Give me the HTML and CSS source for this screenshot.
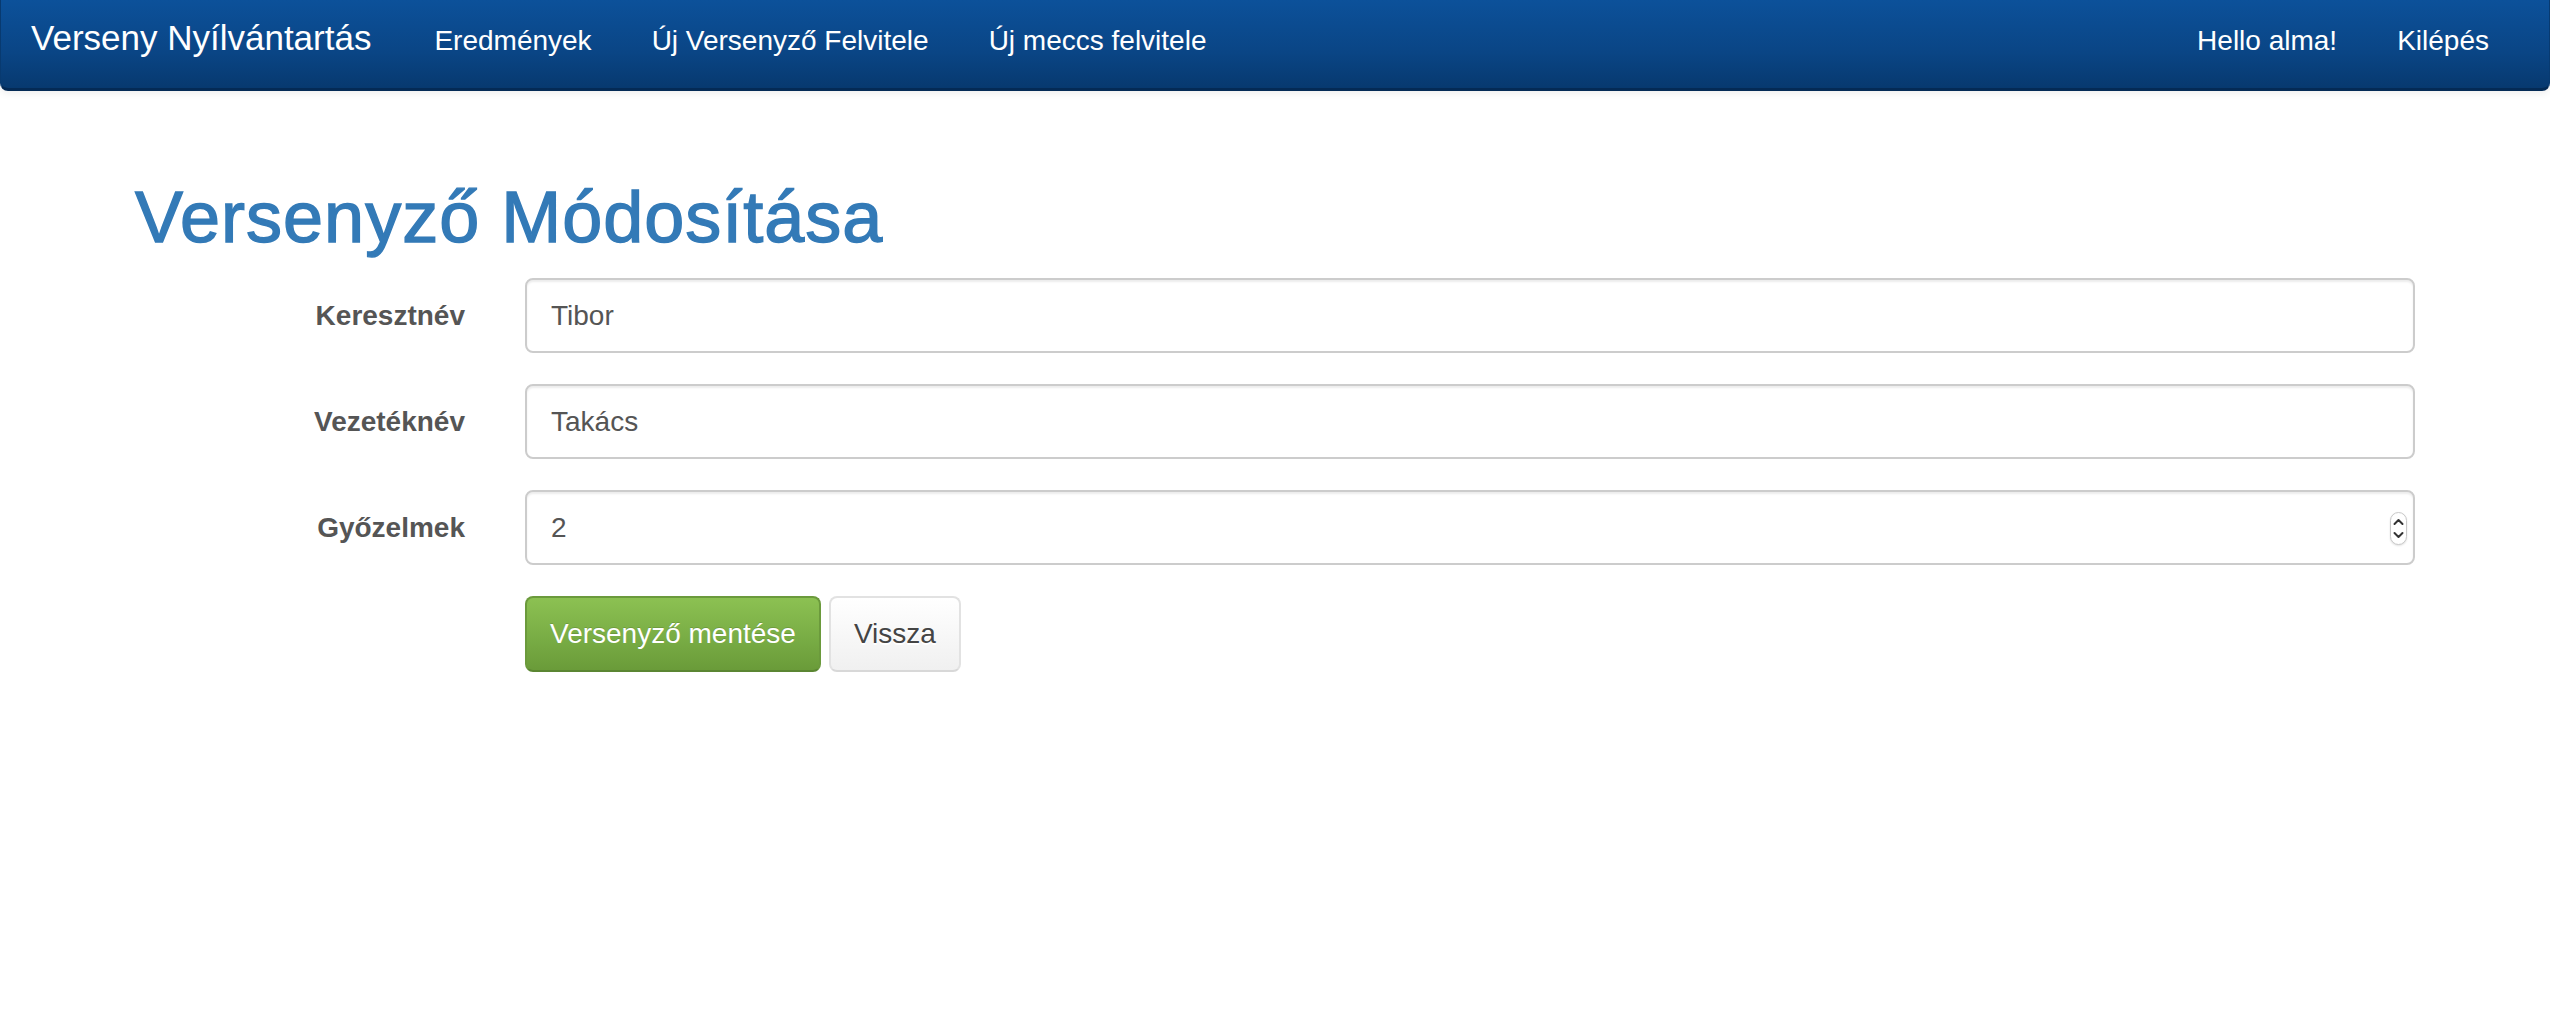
FILE: index.html
```html
<!DOCTYPE html>
<html lang="hu">
<head>
<meta charset="utf-8">
<title>Versenyző Módosítása</title>
<link rel="stylesheet" href="styles.css">
</head>
<body>
<nav class="navbar">
  <a class="brand" href="#">Verseny Nyílvántartás</a>
  <ul class="nav">
    <li><a href="#">Eredmények</a></li>
    <li><a href="#">Új Versenyző Felvitele</a></li>
    <li><a href="#">Új meccs felvitele</a></li>
  </ul>
  <ul class="nav nav-right">
    <li><a href="#">Hello alma!</a></li>
    <li><a href="#">Kilépés</a></li>
  </ul>
</nav>
<main class="container">
  <h1 class="page-title">Versenyző Módosítása</h1>
  <form class="form">
    <div class="form-group">
      <label class="form-label">Keresztnév</label>
      <div class="form-field"><input class="form-control" type="text" value="Tibor"></div>
    </div>
    <div class="form-group">
      <label class="form-label">Vezetéknév</label>
      <div class="form-field"><input class="form-control" type="text" value="Takács"></div>
    </div>
    <div class="form-group">
      <label class="form-label">Győzelmek</label>
      <div class="form-field">
        <div class="number-wrap">
          <input class="form-control" type="text" value="2">
          <span class="spinner">
            <svg width="17" height="33" viewBox="0 0 17 33" aria-hidden="true">
              <path d="M4.5 12 L8.5 8 L12.5 12" fill="none" stroke="#333" stroke-width="2" stroke-linecap="round" stroke-linejoin="round"/>
              <path d="M4.5 21 L8.5 25 L12.5 21" fill="none" stroke="#333" stroke-width="2" stroke-linecap="round" stroke-linejoin="round"/>
            </svg>
          </span>
        </div>
      </div>
    </div>
    <div class="form-group">
      <div class="form-field form-offset">
        <button class="btn btn-success" type="button">Versenyző mentése</button>
        <button class="btn btn-default" type="button">Vissza</button>
      </div>
    </div>
  </form>
</main>
</body>
</html>
```

FILE: styles.css
```css
* { box-sizing: border-box; }

html, body {
  margin: 0;
  padding: 0;
  background: #fff;
  font-family: "Liberation Sans", Arial, Helvetica, sans-serif;
  color: #333;
}

.navbar {
  display: flex;
  align-items: baseline;
  height: 91px;
  padding: 18px 30px 0 0;
  background: linear-gradient(to bottom, #0c519a 0%, #0a4585 60%, #07396f 100%);
  border-left: 1px solid #083a70;
  border-right: 1px solid #083a70;
  border-bottom: 3px solid #042a55;
  border-radius: 0 0 8px 8px;
  box-shadow: 0 2px 8px rgba(0, 0, 0, 0.08);
}

.brand {
  display: block;
  padding: 0 33px 0 30px;
  font-size: 35px;
  line-height: 40px;
  color: #fff;
  text-decoration: none;
}

.nav {
  display: flex;
  align-items: baseline;
  list-style: none;
  margin: 0;
  padding: 0;
}

.nav a {
  display: block;
  padding: 0 30px;
  font-size: 28px;
  line-height: 40px;
  color: #fff;
  text-decoration: none;
}

.nav-right {
  margin-left: auto;
}

.container {
  max-width: 2340px;
  margin: 0 auto;
  padding: 86px 30px 0;
}

.page-title {
  margin: 0 0 21px;
  font-size: 72px;
  line-height: 80px;
  font-weight: normal;
  letter-spacing: 1px;
  color: #337ab7;
  -webkit-text-stroke: 1.4px #337ab7;
}

.form {
  margin: 0 -30px;
}

.form-group {
  display: grid;
  grid-template-columns: 390px 1fr;
  margin-bottom: 31px;
}

.form-label {
  padding: 18px 30px 0;
  text-align: right;
  font-size: 28px;
  line-height: 40px;
  font-weight: bold;
  color: #555;
}

.form-field {
  padding: 0 30px;
}

.form-offset {
  grid-column: 2;
  display: flex;
  gap: 8px;
}

.form-control {
  display: block;
  width: 100%;
  height: 75px;
  padding: 0 24px;
  font-family: inherit;
  font-size: 28px;
  line-height: 40px;
  color: #555;
  background: #fff;
  border: 2px solid #cccccc;
  border-radius: 8px;
  box-shadow: inset 0 2px 2px rgba(0, 0, 0, 0.075);
  outline: none;
}

.number-wrap {
  position: relative;
}

.spinner {
  position: absolute;
  right: 8px;
  top: 22px;
  width: 17px;
  height: 33px;
  border: 1px solid #c9c9c9;
  border-radius: 9px;
  background: #fff;
  box-shadow: 0 1px 2px rgba(0, 0, 0, 0.12);
  display: flex;
  align-items: center;
  justify-content: center;
}

.spinner svg {
  display: block;
  flex: none;
  margin: -1px;
}

.btn {
  height: 76px;
  padding: 0 23px;
  font-family: inherit;
  font-size: 28px;
  line-height: 40px;
  border-radius: 8px;
  border: 2px solid transparent;
  cursor: pointer;
}

.btn-success {
  color: #fff;
  background: linear-gradient(to bottom, #8cc152 0%, #79ad45 55%, #6a9b39 100%);
  border-color: #6b9a3c #6b9a3c #5b8632;
  text-shadow: 0 -1px 0 rgba(0, 0, 0, 0.15);
}

.btn-default {
  color: #444;
  background: linear-gradient(to bottom, #ffffff 0%, #f0f0f0 100%);
  border-color: #e2e2e2 #e2e2e2 #d8d8d8;
  text-shadow: 0 2px 0 #fff;
}
```
